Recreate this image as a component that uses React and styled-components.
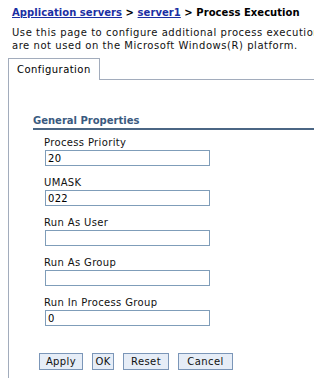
import React from 'react';
import styled, { createGlobalStyle } from 'styled-components';

const GlobalStyle = createGlobalStyle`
  html, body {
    margin: 0;
    padding: 0;
    background: #fff;
  }
  body {
    font-family: "DejaVu Sans", Verdana, sans-serif;
    font-size: 10px;
    color: #000;
    width: 314px;
    height: 378px;
    overflow: hidden;
  }
`;

const Page = styled.div`
  display: flex;
  flex-direction: column;
  height: 378px;
  padding-top: 7px;
  box-sizing: border-box;
  overflow: hidden;
`;

const Breadcrumb = styled.div`
  margin-left: 12px;
  font-weight: bold;
  line-height: 12px;
  white-space: nowrap;
  letter-spacing: 0.05px;
`;

const Crumb = styled.a`
  color: #1b2fa3;
  text-decoration: underline;
`;

const Description = styled.div`
  margin: 7px 0 0 12px;
  line-height: 13px;
  color: #111;
  letter-spacing: 0.55px;
  white-space: nowrap;
  overflow: hidden;
`;

const TabBar = styled.div`
  display: flex;
  margin: 6px 0 0 8px;
`;

const Tab = styled.div`
  width: 92px;
  height: 22px;
  border: 1px solid #a2acbc;
  border-bottom: none;
  padding-left: 8px;
  box-sizing: border-box;
  display: flex;
  align-items: center;
  background: #fff;
  letter-spacing: 0.45px;
`;

const TabFiller = styled.div`
  flex: 1;
  border-bottom: 1px solid #a2acbc;
`;

const Panel = styled.div`
  flex: 1;
  margin-left: 8px;
  border-left: 1px solid #a2acbc;
  padding: 35px 0 0 24px;
`;

const SectionTitle = styled.div`
  color: #3a5a80;
  font-weight: bold;
  line-height: 12px;
  padding-bottom: 1px;
  border-bottom: 2px solid #4b6684;
`;

const Fields = styled.div`
  display: flex;
  flex-direction: column;
  gap: 11px;
  padding: 7px 0 0 11px;
`;

const Field = styled.div`
  display: flex;
  flex-direction: column;
  gap: 1px;
`;

const Label = styled.label`
  line-height: 12px;
  color: #111;
  letter-spacing: 0.35px;
`;

const Input = styled.input`
  width: 165px;
  height: 16px;
  margin-left: 1px;
  box-sizing: border-box;
  border: 1px solid #7f9db9;
  padding: 0 2px;
  font-family: "DejaVu Sans", Verdana, sans-serif;
  font-size: 10px;
  color: #000;
  outline: none;
  letter-spacing: 0.3px;
`;

const Buttons = styled.div`
  display: flex;
  gap: 9px;
  margin: 27px 0 0 6px;
`;

const Button = styled.button`
  width: ${(p) => p.w}px;
  height: 17px;
  padding: 0;
  box-sizing: border-box;
  border: 1px solid #7b96b8;
  background: #e6edf7;
  font-family: "DejaVu Sans", Verdana, sans-serif;
  font-size: 10px;
  color: #111;
  letter-spacing: 0.4px;
`;

const fields = [
  { label: 'Process Priority', value: '20' },
  { label: 'UMASK', value: '022' },
  { label: 'Run As User', value: '' },
  { label: 'Run As Group', value: '' },
  { label: 'Run In Process Group', value: '0' },
];

const buttons = [
  { text: 'Apply', w: 44 },
  { text: 'OK', w: 22 },
  { text: 'Reset', w: 46 },
  { text: 'Cancel', w: 55 },
];

export default function App() {
  return (
    <Page>
      <GlobalStyle />
      <Breadcrumb>
        <Crumb href="#">Application servers</Crumb> &gt; <Crumb href="#">server1</Crumb> &gt; Process Execution
      </Breadcrumb>
      <Description>
        Use this page to configure additional process execution settings that
        <br />
        are not used on the Microsoft Windows(R) platform.
      </Description>
      <TabBar>
        <Tab>Configuration</Tab>
        <TabFiller />
      </TabBar>
      <Panel>
        <SectionTitle>General Properties</SectionTitle>
        <Fields>
          {fields.map((f) => (
            <Field key={f.label}>
              <Label>{f.label}</Label>
              <Input defaultValue={f.value} />
            </Field>
          ))}
        </Fields>
        <Buttons>
          {buttons.map((b) => (
            <Button key={b.text} w={b.w}>{b.text}</Button>
          ))}
        </Buttons>
      </Panel>
    </Page>
  );
}
